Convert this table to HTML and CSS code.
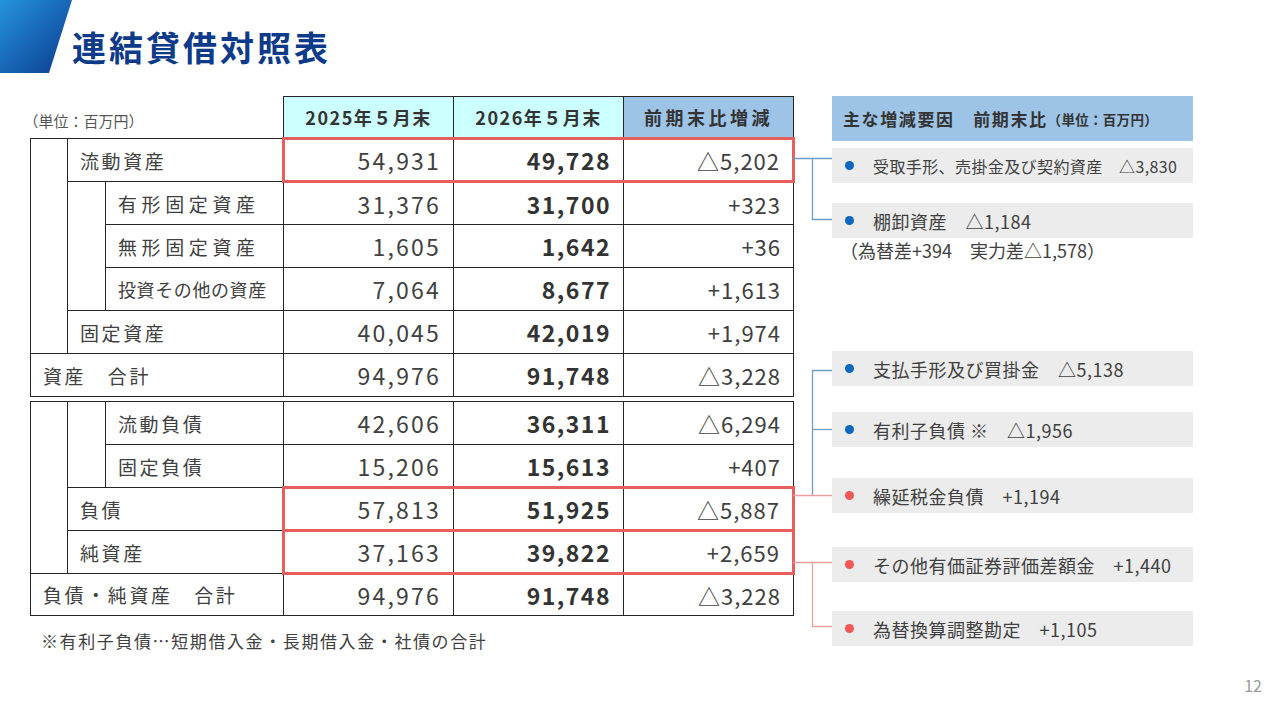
FILE: index.html
```html
<!DOCTYPE html>
<html lang="ja">
<head>
<meta charset="utf-8">
<title>連結貸借対照表</title>
<link rel="stylesheet" href="styles.css">
</head>
<body>
<div class="slide">
  <header class="title-bar">
    <svg class="title-mark" width="72" height="73" viewBox="0 0 72 73">
      <defs>
        <linearGradient id="tg" x1="0" y1="0" x2="1" y2="1">
          <stop offset="0" stop-color="#2594dc"/>
          <stop offset="1" stop-color="#0a3a8e"/>
        </linearGradient>
      </defs>
      <polygon points="0,0 72,0 49,73 0,73" fill="url(#tg)"/>
    </svg>
    <h1 class="title">連結貸借対照表</h1>
  </header>

  <main class="content">
    <section class="bs">
      <table class="sheet">
        <colgroup>
          <col class="c-ind"><col class="c-ind2"><col class="c-lbl">
          <col class="c-val"><col class="c-val"><col class="c-val">
        </colgroup>
        <thead>
          <tr class="head-row">
            <th class="unit" colspan="3">（単位：百万円）</th>
            <th class="h-cyan">2025年５月末</th>
            <th class="h-cyan">2026年５月末</th>
            <th class="h-blue">前期末比増減</th>
          </tr>
        </thead>
        <tbody>
          <tr class="hl">
            <td class="blank" rowspan="5"></td>
            <td class="lbl" colspan="2">流動資産</td>
            <td class="v25 hl-l">54,931</td>
            <td class="v26">49,728</td>
            <td class="diff hl-r">△5,202</td>
          </tr>
          <tr>
            <td class="blank" rowspan="3"></td>
            <td class="lbl lbl-w">有形固定資産</td>
            <td class="v25">31,376</td>
            <td class="v26">31,700</td>
            <td class="diff">+323</td>
          </tr>
          <tr>
            <td class="lbl lbl-w">無形固定資産</td>
            <td class="v25">1,605</td>
            <td class="v26">1,642</td>
            <td class="diff">+36</td>
          </tr>
          <tr>
            <td class="lbl lbl-s">投資その他の資産</td>
            <td class="v25">7,064</td>
            <td class="v26">8,677</td>
            <td class="diff">+1,613</td>
          </tr>
          <tr>
            <td class="lbl" colspan="2">固定資産</td>
            <td class="v25">40,045</td>
            <td class="v26">42,019</td>
            <td class="diff">+1,974</td>
          </tr>
          <tr>
            <td class="lbl" colspan="3">資産　合計</td>
            <td class="v25">94,976</td>
            <td class="v26">91,748</td>
            <td class="diff">△3,228</td>
          </tr>
        </tbody>
      </table>

      <table class="sheet sheet-liab">
        <colgroup>
          <col class="c-ind"><col class="c-ind2"><col class="c-lbl">
          <col class="c-val"><col class="c-val"><col class="c-val">
        </colgroup>
        <tbody>
          <tr>
            <td class="blank" rowspan="4"></td>
            <td class="blank" rowspan="2"></td>
            <td class="lbl">流動負債</td>
            <td class="v25">42,606</td>
            <td class="v26">36,311</td>
            <td class="diff">△6,294</td>
          </tr>
          <tr>
            <td class="lbl">固定負債</td>
            <td class="v25">15,206</td>
            <td class="v26">15,613</td>
            <td class="diff">+407</td>
          </tr>
          <tr class="hl">
            <td class="lbl" colspan="2">負債</td>
            <td class="v25 hl-l">57,813</td>
            <td class="v26">51,925</td>
            <td class="diff hl-r">△5,887</td>
          </tr>
          <tr class="hl">
            <td class="lbl" colspan="2">純資産</td>
            <td class="v25 hl-l">37,163</td>
            <td class="v26">39,822</td>
            <td class="diff hl-r">+2,659</td>
          </tr>
          <tr class="last">
            <td class="lbl" colspan="3">負債・純資産　合計</td>
            <td class="v25">94,976</td>
            <td class="v26">91,748</td>
            <td class="diff">△3,228</td>
          </tr>
        </tbody>
      </table>

      <p class="footnote">※有利子負債…短期借入金・長期借入金・社債の合計</p>
    </section>

    <div class="connectors">
      <svg width="39" height="550" viewBox="0 0 39 550">
        <g class="ln-blue" fill="none">
          <path d="M0 62.5 H39"/>
          <path d="M19.5 62.5 V123.5 H39"/>
          <path d="M19.5 399.5 V274.5 H39"/>
          <path d="M19.5 333.5 H39"/>
        </g>
        <g class="ln-red" fill="none">
          <path d="M0 399.5 H39"/>
          <path d="M0 466.5 H39"/>
          <path d="M19.5 466.5 V530.5 H39"/>
        </g>
      </svg>
    </div>

    <aside class="factors">
      <div class="factors-head">主な増減要因　前期末比<span class="unit-s">（単位：百万円）</span></div>
      <div class="factor factor-sm f1"><span class="dot blue"></span>受取手形、売掛金及び契約資産　△3,830</div>
      <div class="factor f2"><span class="dot blue"></span>棚卸資産　△1,184</div>
      <div class="factor-note">（為替差+394　実力差△1,578）</div>
      <div class="factor f3"><span class="dot blue"></span>支払手形及び買掛金　△5,138</div>
      <div class="factor f4"><span class="dot blue"></span>有利子負債 ※　△1,956</div>
      <div class="factor f5"><span class="dot red"></span>繰延税金負債　+1,194</div>
      <div class="factor f6"><span class="dot red"></span>その他有価証券評価差額金　+1,440</div>
      <div class="factor f7"><span class="dot red"></span>為替換算調整勘定　+1,105</div>
    </aside>
  </main>

  <footer class="page-foot">12</footer>
</div>
</body>
</html>
```

FILE: styles.css
```css
* { box-sizing: border-box; }

html, body {
  margin: 0;
  padding: 0;
  background: #ffffff;
}

body {
  font-family: "Noto Sans CJK JP", "Noto Sans", sans-serif;
  color: #404040;
}

.slide {
  width: 1280px;
  height: 720px;
  overflow: hidden;
  display: flex;
  flex-direction: column;
  background: #ffffff;
}

/* ---------- title ---------- */
.title-bar {
  display: flex;
  align-items: flex-start;
  height: 73px;
  flex: none;
}

.title-mark {
  display: block;
  flex: none;
}

.title {
  margin: 0;
  padding-top: 26px;
  font-size: 34px;
  line-height: 42px;
  font-weight: 700;
  letter-spacing: 3px;
  color: #0e3a8a;
}

/* ---------- content ---------- */
.content {
  display: flex;
  align-items: flex-start;
  padding: 23px 0 0 30px;
  flex: none;
}

.bs {
  width: 763px;
  flex: none;
}

.sheet {
  border-collapse: collapse;
  table-layout: fixed;
  width: 763px;
}

.sheet-liab {
  margin-top: 4px;
}

.c-ind { width: 37px; }
.c-ind2 { width: 38px; }
.c-lbl { width: 178px; }
.c-val { width: 170px; }

.sheet th,
.sheet td {
  border: 1px solid #262626;
  padding: 0 12px;
  white-space: nowrap;
}

.head-row {
  height: 42px;
}

.sheet th.unit {
  border: none;
  text-align: left;
  vertical-align: bottom;
  padding: 0 0 7px 0;
  text-indent: -7px;
  font-size: 15px;
  font-weight: 400;
  color: #555;
  line-height: 20px;
}

.h-cyan,
.h-blue {
  font-size: 18px;
  font-weight: 700;
  color: #333;
  text-align: center;
  letter-spacing: 1.5px;
}

.h-cyan { background: #ccffff; }
.h-blue { background: #9dc3e6; letter-spacing: 3.5px; }

.sheet tbody tr {
  height: 43px;
}

.sheet tbody tr.last {
  height: 42px;
}

.sheet td.blank {
  padding: 0;
}

.lbl {
  font-size: 19px;
  letter-spacing: 2.6px;
  color: #404040;
  text-align: left;
}

.lbl-w {
  letter-spacing: 4.6px;
}

.lbl-s {
  font-size: 18px;
  letter-spacing: 0.6px;
}

.v25,
.v26,
.diff {
  text-align: right;
  padding-right: 10px;
}

.v25 {
  font-size: 23px;
  letter-spacing: 2.2px;
  color: #404040;
}

.v26 {
  font-size: 23px;
  font-weight: 700;
  letter-spacing: 1.5px;
  color: #333;
  padding-right: 11px;
}

.diff {
  font-size: 22px;
  letter-spacing: 1px;
  color: #404040;
  padding-right: 11px;
}

/* highlighted rows */
.sheet tr.hl td.v25,
.sheet tr.hl td.v26,
.sheet tr.hl td.diff {
  border-top: 3px solid #e65f5f;
  border-bottom: 3px solid #e65f5f;
}

.sheet tr.hl td.hl-l { border-left: 3px solid #e65f5f; }
.sheet tr.hl td.hl-r { border-right: 3px solid #e65f5f; }

.footnote {
  margin: 13px 0 0 11px;
  font-size: 17px;
  line-height: 24px;
  letter-spacing: 1.6px;
  color: #404040;
}

/* ---------- connectors ---------- */
.connectors {
  width: 39px;
  flex: none;
}

.connectors svg {
  display: block;
}

.ln-blue { stroke: #6c9ec4; stroke-width: 1.3; }
.ln-red { stroke: #eaa0a0; stroke-width: 1.3; }

/* ---------- factors panel ---------- */
.factors {
  width: 361px;
  flex: none;
  display: flex;
  flex-direction: column;
}

.factors-head {
  height: 45px;
  background: #9dc3e6;
  display: flex;
  align-items: center;
  padding-left: 11px;
  font-size: 17px;
  font-weight: 700;
  letter-spacing: 1.6px;
  color: #333;
}

.unit-s {
  font-size: 13.5px;
  letter-spacing: 0.3px;
}

.factor {
  height: 35px;
  background: #ececec;
  display: flex;
  align-items: center;
  padding-left: 13px;
  font-size: 18px;
  letter-spacing: 0.5px;
  color: #404040;
  white-space: nowrap;
}

.factor-sm {
  font-size: 16px;
  letter-spacing: 0.4px;
}

.dot {
  width: 9px;
  height: 9px;
  border-radius: 50%;
  margin-right: 19px;
  flex: none;
}

.dot.blue { background: #0b67c0; }
.dot.red { background: #f05858; }

.f1 { margin-top: 7px; }
.f2 { margin-top: 20px; }
.f3 { margin-top: 89px; }
.f4 { margin-top: 26px; }
.f5 { margin-top: 31px; }
.f6 { margin-top: 34px; }
.f7 { margin-top: 29px; }

.factor-note {
  height: 24px;
  line-height: 24px;
  padding-left: 8px;
  font-size: 18px;
  color: #404040;
  white-space: nowrap;
}

/* ---------- page number ---------- */
.page-foot {
  margin-top: auto;
  padding: 0 18px 26px 0;
  text-align: right;
  font-size: 16px;
  line-height: 18px;
  color: #9a9a9a;
}
```
